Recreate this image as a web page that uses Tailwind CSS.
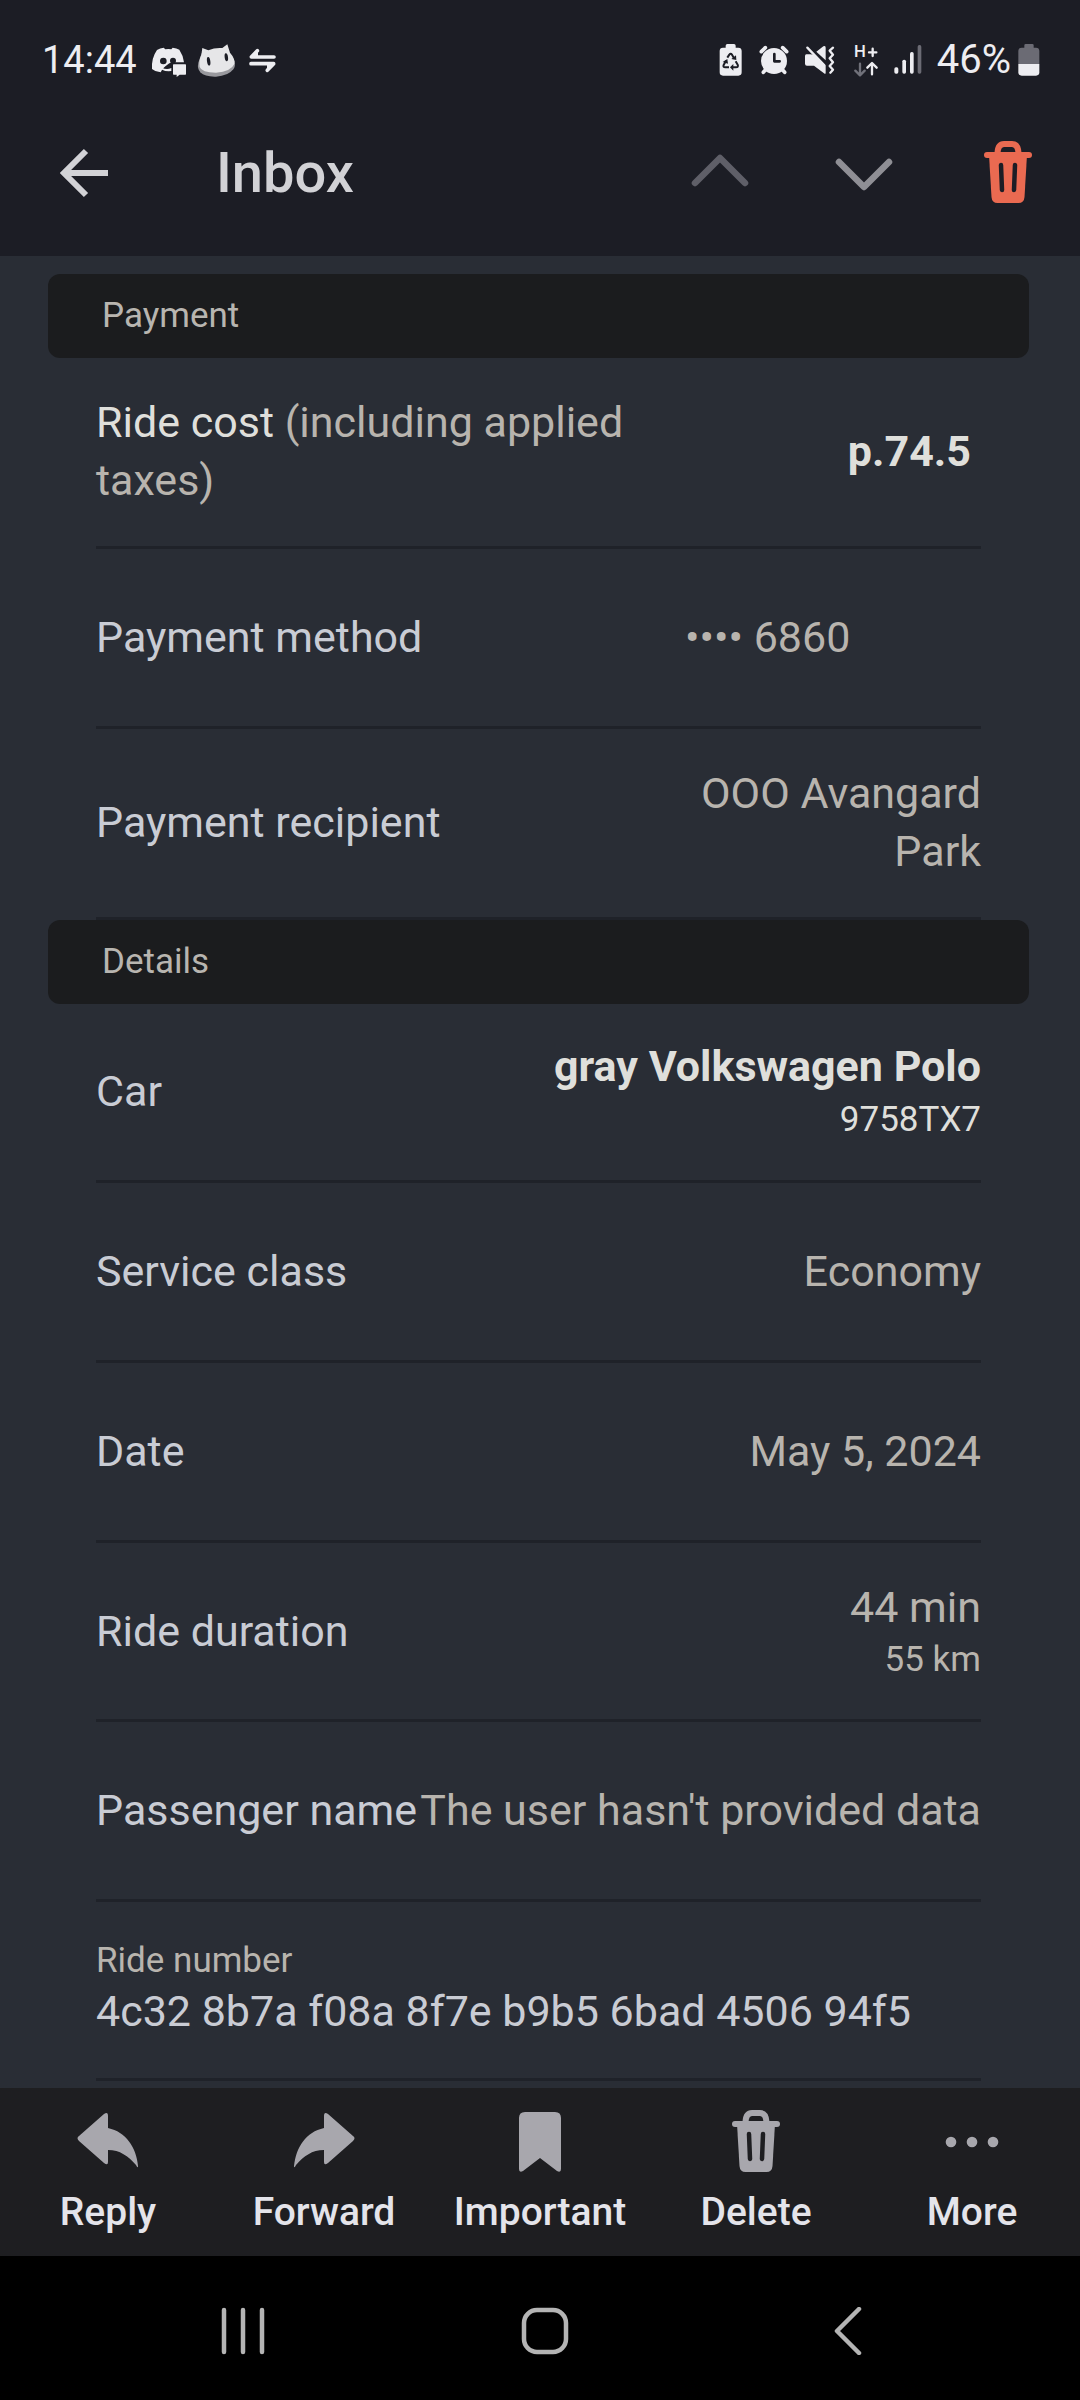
<!DOCTYPE html>
<html lang="en">
<head>
  <meta charset="UTF-8" />
  <meta name="viewport" content="width=device-width, initial-scale=1" />
  <title>Inbox – Ride receipt</title>
  <script src="https://cdn.jsdelivr.net/npm/@tailwindcss/browser@4"></script>
</head>
<body class="min-h-screen flex flex-col bg-[#292d35] text-[#c9ccd4] font-[Roboto,sans-serif]">

  <!-- Status bar -->
  <div class="bg-[#1c1d25] text-[#ededf1] h-[120px] pl-[42px] pr-10 flex items-center justify-between text-[38px]">
    <div class="flex items-center gap-[10px]">
      <span class="mr-1">14:44</span>
      <svg class="w-9 h-10" viewBox="453 60 108 120" fill="currentColor">
        <path fill-rule="evenodd" d="M471 90Q480 84 491 83L496 88Q505 86 514 88L518 83Q530 84 538 89Q549 105 552 127H522L508 130Q497 138 488 146L482 157Q466 156 456 147Q454 114 471 90ZM490 113a10 10 0 1 0 0 20a10 10 0 1 0 0-20Z"/>
        <path d="M486 143Q500 150 514 144V153Q498 155 486 149Z"/>
        <circle cx="519" cy="122" r="9" fill="#1c1d25"/>
        <path d="M521 133h35q2 0 2 2v27q0 2-2 2h-17l-9 7v-7h-9q-2 0-2-2v-27q0-2 2-2Z"/>
      </svg>
      <svg class="w-[41px] h-10" viewBox="588 60 123 120">
        <path fill="#98989d" d="M602 100L592 128Q588 146 598 157Q612 171 645 170Q682 168 697 148Q704 138 701 122Z"/>
        <path fill="#e6e6e8" d="M604 84L622 91Q642 82 664 84L679 73L687 98Q703 116 700 132Q690 155 645 158Q602 158 596 141Q593 120 601 105Z"/>
        <ellipse cx="623" cy="124" rx="5" ry="13" fill="#1c1d25" transform="rotate(-8 623 124)"/>
        <ellipse cx="676" cy="112" rx="5" ry="12" fill="#1c1d25" transform="rotate(-8 676 112)"/>
      </svg>
      <svg class="w-[29px] h-10" viewBox="743 60 87 120" fill="none" stroke="currentColor" stroke-width="11" stroke-linecap="round" stroke-linejoin="round">
        <path d="M821 111H753L771 92M752 131H820L801 151"/>
        <path d="M760 107L770 97V108ZM812 135L803 145V134Z" stroke-width="6" fill="currentColor"/>
      </svg>
    </div>
    <div class="flex items-center gap-[15px]">
      <svg class="w-[26px] h-10" viewBox="112 60 78 120">
        <path fill="currentColor" d="M140 72h20q5 0 5 5v6h8q10 0 10 10v64q0 10-10 10h-46q-10 0-10-10V93q0-10 10-10h8v-6q0-5 5-5Z"/>
        <path fill="none" stroke="#1c1d25" stroke-width="6" stroke-linejoin="round" d="M140 113L146 104Q150 99 154 104L161 116M165 124L171 134Q174 142 166 142H155M145 142H134Q126 142 129 135L136 122"/>
        <path fill="#1c1d25" d="M152 117L167 120L166 106ZM158 132V152L148 142ZM126 126L140 117L142 131Z"/>
      </svg>
      <svg class="w-[30px] h-10" viewBox="232 60 90 120">
        <circle cx="277" cy="123" r="39" fill="currentColor"/>
        <path fill="none" stroke="currentColor" stroke-width="11" stroke-linecap="round" d="M239 95L251 83M303 83L315 95M253 148L245 157M301 148L309 157"/>
        <path fill="none" stroke="#1c1d25" stroke-width="8" stroke-linecap="round" stroke-linejoin="round" d="M278 102V124H294"/>
      </svg>
      <svg class="w-[31px] h-10 mr-1" viewBox="367 60 93 120">
        <path fill="currentColor" d="M374 103H385L400 104L432 137V158Q432 164 427 160L397 137H376Q370 137 370 131V108Q370 103 374 103ZM404 95L425 79Q432 75 432 83V121Z"/>
        <path fill="none" stroke="currentColor" stroke-width="7" stroke-linecap="round" stroke-linejoin="round" d="M377 83L428 136M454 83L444 92L454 104L444 115L454 127L444 138L454 149L446 158"/>
      </svg>
      <svg class="w-[25px] h-10" viewBox="519 60 75 120" fill="none" stroke-width="7" stroke-linecap="round" stroke-linejoin="round">
        <text x="519" y="112" font-size="50" font-weight="500" fill="currentColor">H</text>
        <path stroke="currentColor" d="M564 97H586M575 86V108M573 163V131M559 143L573 129L587 143"/>
        <path stroke="#70717a" d="M537 131V164M523 152L537 166L551 152"/>
      </svg>
      <svg class="w-7 h-10" viewBox="640 60 84 120" fill="currentColor">
        <rect x="641" y="142" width="12" height="19" rx="5"/>
        <rect x="665" y="119" width="11" height="42" rx="5"/>
        <rect x="688" y="96" width="11" height="65" rx="5"/>
        <rect x="711" y="75" width="11" height="86" rx="5" fill="#6b6b74"/>
      </svg>
      <div class="flex items-center gap-[7px]">
        <span class="text-[40px]">46%</span>
        <svg class="w-[22px] h-10" viewBox="1013 60 66 120">
          <path fill="#6b6b74" d="M1036 72h20q4 0 4 4v7h7q10 0 10 10v40h-63V93q0-10 10-10h8v-7q0-4 4-4Z"/>
          <path fill="currentColor" d="M1014 132h63v25q0 10-10 10h-43q-10 0-10-10Z"/>
        </svg>
      </div>
    </div>
  </div>

  <!-- App bar -->
  <header class="bg-[#1c1d25] h-[136px] pb-[30px] pl-12 flex items-center">
    <button type="button" aria-label="Back">
      <svg class="size-[72px]" viewBox="0 0 72 72" fill="none" stroke="#d2d2d6" stroke-width="6">
        <path d="M38 14L16 36L38 58M17 36H60"/>
      </svg>
    </button>
    <h1 class="ml-24 flex-1 text-[56px] leading-[72px] font-medium text-[#d2d2d6]">Inbox</h1>
    <button type="button" aria-label="Previous message" class="w-36 flex justify-center">
      <svg class="size-[72px]" viewBox="0 0 72 72" fill="none" stroke="#5f5f68" stroke-width="6.5" stroke-linecap="round" stroke-linejoin="round">
        <path d="M11 46L36 21L61 46"/>
      </svg>
    </button>
    <button type="button" aria-label="Next message" class="w-36 flex justify-center">
      <svg class="size-[72px]" viewBox="0 0 72 72" fill="none" stroke="#8f8f95" stroke-width="6.5" stroke-linecap="round" stroke-linejoin="round">
        <path d="M11 25L36 50L61 25"/>
      </svg>
    </button>
    <button type="button" aria-label="Delete message" class="w-36 flex justify-center text-[#ea6a51]">
      <svg class="size-[72px]" viewBox="0 0 72 72" fill="none" stroke="currentColor" stroke-linecap="round">
        <path fill="currentColor" stroke="none" d="M17 18H55L52.500 60Q52 66 46.500 66H25.500Q20 66 19.500 60Z"/>
        <path stroke-width="6" d="M15 18H57"/>
        <path stroke-width="6" d="M25.500 16Q26 7 32 7H40Q46 7 46.500 16"/>
        <path stroke="#1c1d25" stroke-width="4.500" d="M29 28L30 53M43 28L42 53"/>
      </svg>
    </button>
  </header>

  <!-- Receipt -->
  <main class="flex-1 px-12 pt-[18px] pr-[51px] text-[43px] leading-[58px]">
    <h2 class="bg-[#1b1c1e] rounded-xl h-[84px] px-[54px] flex items-center text-[35px] text-[#b8b5b0]">Payment</h2>
    <dl class="px-12">
      <div class="min-h-[191px] pb-[2px] border-b-3 border-[#1f2229] flex items-center justify-between">
        <dt class="max-w-[600px] text-[#b8b4ae]"><span class="text-[#dfdfdb]">Ride cost</span> (including applied taxes)</dt>
        <dd class="pr-[10px] font-bold text-[#dfdfdb]">p.74.5</dd>
      </div>
      <div class="min-h-[180px] pb-[2px] border-b-3 border-[#1f2229] flex items-center justify-between">
        <dt>Payment method</dt>
        <dd class="w-[296px] text-[#b8b4ae]">•••• 6860</dd>
      </div>
      <div class="min-h-[191px] pb-[2px] border-b-3 border-[#1f2229] flex items-center justify-between">
        <dt>Payment recipient</dt>
        <dd class="w-[296px] text-right text-[#b8b4ae]">OOO Avangard Park</dd>
      </div>
    </dl>

    <h2 class="bg-[#1b1c1e] rounded-xl h-[84px] px-[54px] flex items-center text-[35px] text-[#b8b5b0]">Details</h2>
    <dl class="px-12">
      <div class="min-h-[179px] pb-[2px] border-b-3 border-[#1f2229] flex items-center justify-between">
        <dt>Car</dt>
        <dd class="text-right text-[#dfdfdb]">
          <p class="font-bold">gray Volkswagen Polo</p>
          <p class="text-[35px] leading-[50px]">9758TX7</p>
        </dd>
      </div>
      <div class="min-h-[180px] pb-[2px] border-b-3 border-[#1f2229] flex items-center justify-between">
        <dt>Service class</dt>
        <dd class="text-[#b8b4ae]">Economy</dd>
      </div>
      <div class="min-h-[180px] pb-[2px] border-b-3 border-[#1f2229] flex items-center justify-between">
        <dt>Date</dt>
        <dd class="text-[#b8b4ae]">May 5, 2024</dd>
      </div>
      <div class="min-h-[179px] border-b-3 border-[#1f2229] flex items-center justify-between">
        <dt>Ride duration</dt>
        <dd class="text-right text-[#b8b4ae]">
          <p>44 min</p>
          <p class="text-[35px] leading-[48px]">55 km</p>
        </dd>
      </div>
      <div class="min-h-[180px] pb-[2px] border-b-3 border-[#1f2229] flex items-center justify-between whitespace-nowrap">
        <dt>Passenger name</dt>
        <dd class="text-[#b8b4ae]">The user hasn't provided data</dd>
      </div>
      <div class="min-h-[179px] pb-2 border-b-3 border-[#1f2229] flex flex-col justify-center leading-[50px]">
        <dt class="text-[35px] text-[#b8b4ae]">Ride number</dt>
        <dd>4c32 8b7a f08a 8f7e b9b5 6bad 4506 94f5</dd>
      </div>
    </dl>
  </main>

  <!-- Message actions -->
  <footer class="mt-[7px] bg-[#1e1e21] pt-4 pb-5 grid grid-cols-5 text-[39px] leading-[48px] font-medium text-[#e4e4ea]">
    <button type="button" class="flex flex-col items-center gap-3">
      <svg class="size-[72px]" viewBox="0 0 72 72" fill="#a8a7ad">
        <path d="M7 32L32 10Q36 7 36 12V24C54 28 64 43 66 62Q66 65 64 61C56 52 48 46 36 46V58Q36 62 32 59L7 37Q4 34 7 32Z"/>
      </svg>
      Reply
    </button>
    <button type="button" class="flex flex-col items-center gap-3">
      <svg class="size-[72px]" viewBox="0 0 72 72" fill="#a8a7ad">
        <path d="M65 32L40 10Q36 7 36 12V24C18 28 8 43 6 62Q6 65 8 61C16 52 24 46 36 46V58Q36 62 40 59L65 37Q68 34 65 32Z"/>
      </svg>
      Forward
    </button>
    <button type="button" class="flex flex-col items-center gap-3">
      <svg class="size-[72px]" viewBox="0 0 72 72" fill="#a8a7ad">
        <path d="M21 8H51Q57 8 57 14V65Q57 69 53 67L36 54L19 67Q15 69 15 65V14Q15 8 21 8Z"/>
      </svg>
      Important
    </button>
    <button type="button" class="flex flex-col items-center gap-3">
      <svg class="size-[72px]" viewBox="0 0 72 72" fill="none" stroke="#a8a7ad" stroke-linecap="round">
        <path fill="#a8a7ad" stroke="none" d="M17 20H55L52.500 62Q52 68 46.500 68H25.500Q20 68 19.500 62Z"/>
        <path stroke-width="6" d="M15 20H57"/>
        <path stroke-width="6" d="M25.500 18Q26 9 32 9H40Q46 9 46.500 18"/>
        <path stroke="#1e1e21" stroke-width="4.500" d="M29 30L30 55M43 30L42 55"/>
      </svg>
      Delete
    </button>
    <button type="button" class="flex flex-col items-center gap-3">
      <svg class="size-[72px]" viewBox="0 0 72 72" fill="#a8a7ad">
        <circle cx="15" cy="38" r="5.300"/>
        <circle cx="36" cy="38" r="5.300"/>
        <circle cx="57" cy="38" r="5.300"/>
      </svg>
      More
    </button>
  </footer>

  <!-- System navigation -->
  <nav class="bg-black h-36 pt-[6px] pl-[92px] pr-[82px] grid grid-cols-3 items-center justify-items-center">
    <button type="button" aria-label="Recent apps">
      <svg class="size-12" viewBox="0 0 48 48" stroke="#b4b4b4" stroke-width="4.500" stroke-linecap="round">
        <path d="M5 3V45M24 3V45M43 3V45"/>
      </svg>
    </button>
    <button type="button" aria-label="Home">
      <svg class="size-12" viewBox="0 0 48 48" fill="none" stroke="#b4b4b4" stroke-width="4.500">
        <rect x="3" y="3" width="42" height="42" rx="13"/>
      </svg>
    </button>
    <button type="button" aria-label="Back">
      <svg class="size-12" viewBox="0 0 48 48" fill="none" stroke="#b4b4b4" stroke-width="4.500" stroke-linecap="round" stroke-linejoin="round">
        <path d="M36 2L14 24L36 46"/>
      </svg>
    </button>
  </nav>

</body>
</html>
